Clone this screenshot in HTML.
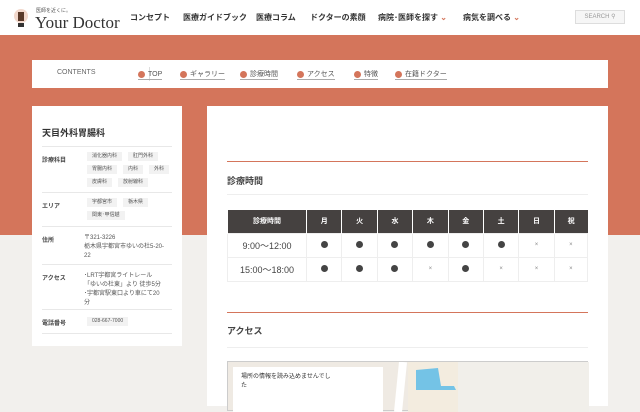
<!DOCTYPE html>
<html><head><meta charset="utf-8"><style>
*{margin:0;padding:0;box-sizing:border-box}
body{width:640px;height:400px;overflow:hidden;background:#f2f0ed;font-family:"Liberation Sans","Noto Sans CJK JP",sans-serif;color:#333;position:relative}
.band{position:absolute;left:0;top:35px;width:640px;height:200px;background:#d4755b}
.hdr{position:absolute;left:0;top:0;width:640px;height:35px;background:#fff}
.logo{position:absolute;left:14px;top:8px;width:14px;height:20px}
.lt{position:absolute;left:36px;top:7px;font-size:5px;color:#555}
.ln{position:absolute;left:35px;top:13px;font-family:"Liberation Serif",serif;font-size:17px;color:#333}
.nav{position:absolute;top:12px;font-size:8px;color:#333;font-weight:bold}
.srch{position:absolute;left:575px;top:10px;width:50px;height:14px;border:1px solid #ddd;background:#f6f6f6;font-size:6px;color:#999;text-align:center;line-height:12px}
.cb{position:absolute;left:32px;top:60px;width:576px;height:28px;background:#fff}
.cb .c{position:absolute;left:25px;top:9px;font-size:7px;color:#666}
.cb .sep{position:absolute;left:117px;top:7px;width:1px;height:14px;background:#ddd}
.ci{position:absolute;top:10px;font-size:7px;color:#555;border-bottom:1px solid #aaa;padding-left:10px;line-height:9px}
.ci:before{content:"";position:absolute;left:0;top:1px;width:7px;height:7px;border-radius:50%;background:#d4755b}
.side{position:absolute;left:32px;top:106px;width:150px;height:240px;background:#fff}
.side h3{position:absolute;left:10px;top:20px;font-size:9px;font-weight:bold}
.row{position:absolute;left:10px;width:130px;border-top:1px solid #e8e8e8;font-size:6px}
.row .k{position:absolute;left:0;top:8px;font-weight:bold;color:#444}
.tags{position:absolute;left:45px;top:5px;width:90px;display:flex;flex-wrap:wrap;column-gap:6px;row-gap:4px}
.tag{display:block;background:#f2f2f2;font-size:5px;line-height:9px;height:9px;padding:0 5px;color:#555;white-space:nowrap}
.v{position:absolute;left:42px;top:7px;width:80px;line-height:9px;color:#555;word-break:break-all}
.main{position:absolute;left:207px;top:106px;width:401px;height:300px;background:#fff}
.ht{position:absolute;left:20px;width:361px;border-top:1px solid #d4755b}
.ht2{position:absolute;left:20px;width:361px;border-top:1px solid #eee}
.h2{position:absolute;left:20px;font-size:9px;font-weight:bold;color:#444}
table{position:absolute;left:20px;top:104px;width:361px;border-collapse:collapse}
th{background:#454140;color:#fff;font-size:7px;height:23px;border-left:1px solid #fff}
td{height:24px;border:1px solid #eee;text-align:center;font-size:9px;color:#444}
.d{display:inline-block;width:7px;height:7px;border-radius:50%;background:#444}
.x{font-size:6px;color:#888}
.map{position:absolute;left:20px;top:255px;width:361px;height:50px;background:#efeae3;border:1px solid #ccc}
.mi{position:absolute;left:5px;top:5px;width:150px;height:45px;background:#fff;font-size:6px;line-height:9px;padding:6px 8px;color:#333}
</style></head><body>
<div class="band"></div>
<div class="hdr">
<svg class="logo" viewBox="0 0 14 20"><circle cx="7" cy="8" r="7" fill="#f2d8cc"/><rect x="4" y="4" width="6" height="9" fill="#5a3a2a"/><rect x="4" y="15" width="6" height="4" fill="#333"/></svg>
<div class="lt">医師を近くに。</div><div class="ln">Your Doctor</div>
<div class="nav" style="left:130px">コンセプト</div>
<div class="nav" style="left:183px">医療ガイドブック</div>
<div class="nav" style="left:256px">医療コラム</div>
<div class="nav" style="left:310px">ドクターの素顔</div>
<div class="nav" style="left:378px">病院･医師を探す <span style="color:#d4755b">⌄</span></div>
<div class="nav" style="left:463px">病気を調べる <span style="color:#d4755b">⌄</span></div>
<div class="srch">SEARCH ⚲</div>
</div>
<div class="cb"><div class="c">CONTENTS</div><div class="sep"></div>
<div class="ci" style="left:106px">TOP</div>
<div class="ci" style="left:148px">ギャラリー</div>
<div class="ci" style="left:208px">診療時間</div>
<div class="ci" style="left:265px">アクセス</div>
<div class="ci" style="left:322px">特徴</div>
<div class="ci" style="left:363px">在籍ドクター</div>
</div>
<div class="side"><h3>天目外科胃腸科</h3>
<div class="row" style="top:40px;height:46px"><div class="k">診療科目</div><div class="tags"><span class="tag">消化器内科</span><span class="tag">肛門外科</span><span class="tag">胃腸内科</span><span class="tag">内科</span><span class="tag">外科</span><span class="tag">皮膚科</span><span class="tag">放射線科</span></div></div>
<div class="row" style="top:86px;height:34px"><div class="k">エリア</div><div class="tags"><span class="tag">宇都宮市</span><span class="tag">栃木県</span><span class="tag">関東･甲信越</span></div></div>
<div class="row" style="top:120px;height:38px"><div class="k">住所</div><div class="v">〒321-3226<br>栃木県宇都宮市ゆいの杜5-20-22</div></div>
<div class="row" style="top:158px;height:45px"><div class="k">アクセス</div><div class="v">･LRT宇都宮ライトレール「ゆいの杜東」より 徒歩5分<br>･宇都宮駅東口より車にて20分</div></div>
<div class="row" style="top:203px;height:25px;border-bottom:1px solid #e8e8e8"><div class="k">電話番号</div><div class="tags" style="top:7px"><span class="tag">028-667-7000</span></div></div>
</div>
<div class="main">
<div class="ht" style="top:55px"></div>
<div class="h2" style="top:68px">診療時間</div>
<div class="ht2" style="top:88px"></div>
<table><tr><th style="width:79px">診療時間</th><th>月</th><th>火</th><th>水</th><th>木</th><th>金</th><th>土</th><th>日</th><th>祝</th></tr>
<tr><td>9:00〜12:00</td><td><i class="d"></i></td><td><i class="d"></i></td><td><i class="d"></i></td><td><i class="d"></i></td><td><i class="d"></i></td><td><i class="d"></i></td><td class="x">×</td><td class="x">×</td></tr>
<tr><td>15:00〜18:00</td><td><i class="d"></i></td><td><i class="d"></i></td><td><i class="d"></i></td><td class="x">×</td><td><i class="d"></i></td><td class="x">×</td><td class="x">×</td><td class="x">×</td></tr></table>
<div class="ht" style="top:206px"></div>
<div class="h2" style="top:218px">アクセス</div>
<div class="ht2" style="top:241px"></div>
<div class="map"><svg style="position:absolute;left:0;top:0" width="361" height="50"><rect x="180" y="0" width="180" height="50" fill="#f3ecdf"/><rect x="230" y="0" width="131" height="50" fill="#f1efea"/><path d="M175 0 L170 50" stroke="#fff" stroke-width="8"/><path d="M188 8 L210 6 L213 24 L226 24 L228 28 L188 28 Z" fill="#74c3e6"/></svg><div class="mi">場所の情報を読み込めませんでし<br>た</div></div>
</div>
</body></html>
